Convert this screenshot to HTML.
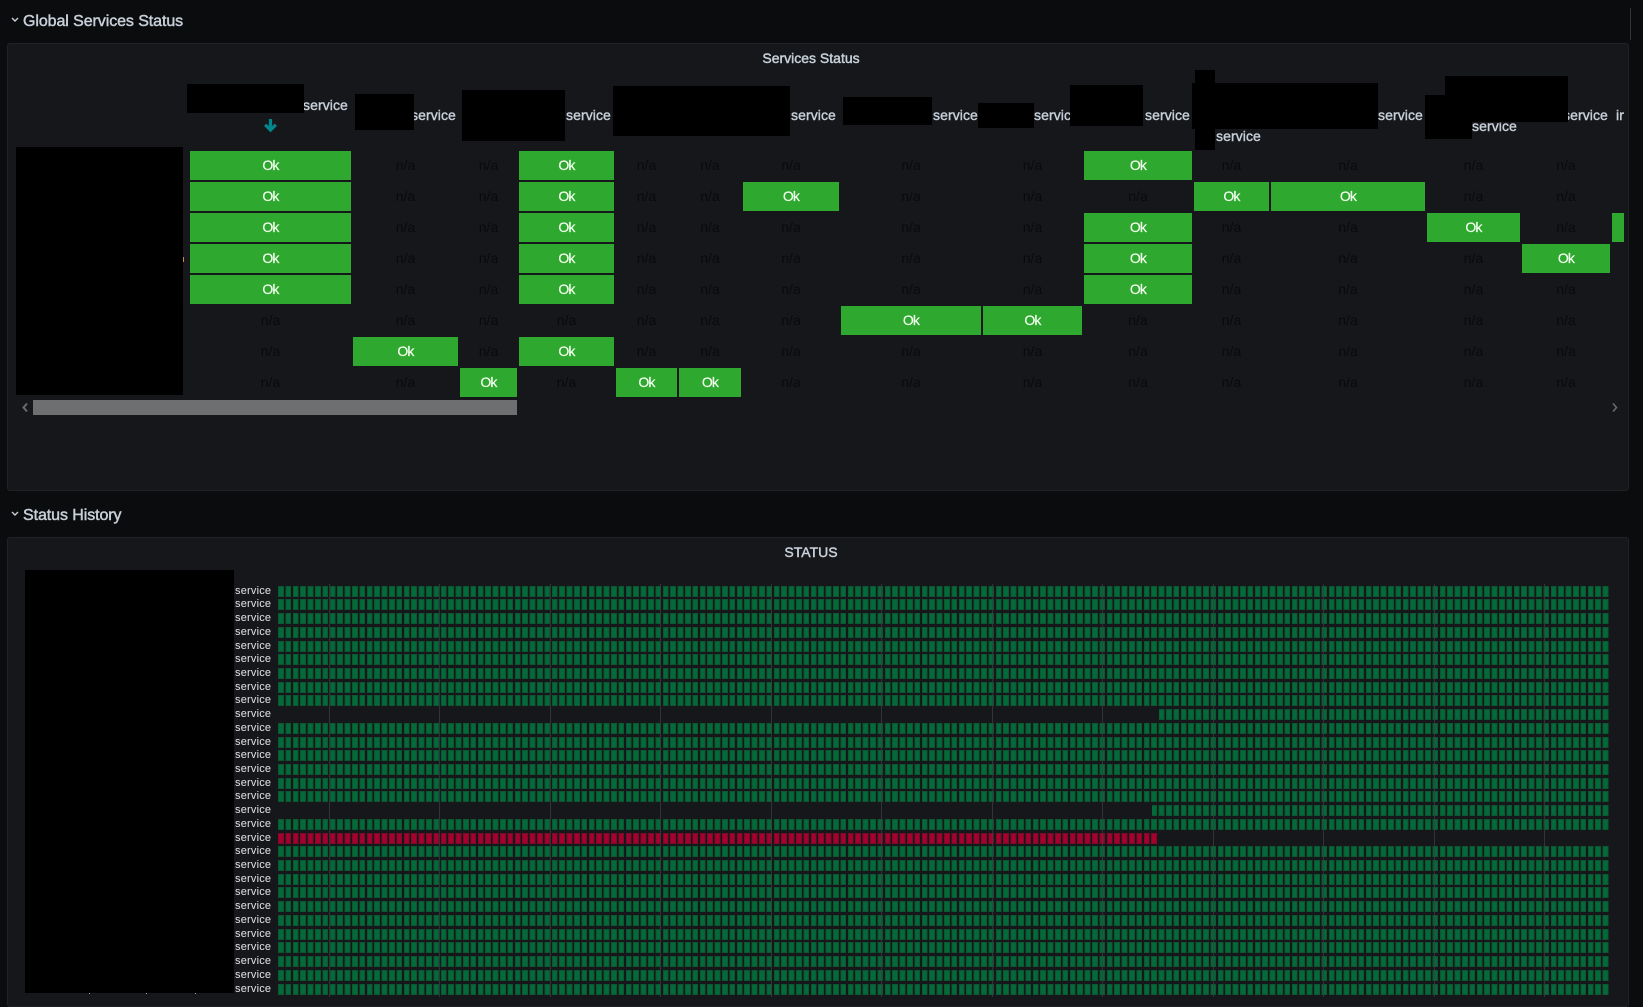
<!DOCTYPE html>
<html><head><meta charset="utf-8"><title>Status</title>
<style>
html,body{margin:0;padding:0;background:#0b0c0e;}
body{width:1643px;height:997px;position:relative;overflow:hidden;font-family:"Liberation Sans",sans-serif;}
.a{position:absolute;}
.panel{position:absolute;left:7px;width:1622px;background:#15171b;border:1px solid #202226;border-radius:3px;box-sizing:border-box;}
.sec{position:absolute;left:23px;font-size:16px;line-height:20px;color:#c7d0d9;letter-spacing:-.08px;-webkit-text-stroke:.45px #c7d0d9;white-space:nowrap;}
.ptitle{position:absolute;left:0;width:1606px;text-align:center;font-size:14px;line-height:18px;color:#c7d0d9;-webkit-text-stroke:.45px #c7d0d9;}
.h{position:absolute;font-size:14px;line-height:16px;color:#c7d0d9;letter-spacing:.08px;-webkit-text-stroke:.4px #c7d0d9;white-space:nowrap;}
.b{position:absolute;background:#000;}
.grid{position:absolute;left:190px;top:151px;display:grid;grid-template-columns:161px 105px 57px 95px 61px 62px 96px 140px 99px 108px 75px 154px 93px 88px 12px;grid-auto-rows:29px;column-gap:2px;row-gap:2px;}
.grid div{font-size:14px;line-height:29px;text-align:center;color:#090a0c;overflow:hidden;white-space:nowrap;}
.grid .o{background:#2fa82f;color:#f4fff0;letter-spacing:-.8px;-webkit-text-stroke:.2px #f4fff0;}
</style></head>
<body>

<div class="panel" style="top:43px;height:448px;"><div class="ptitle" style="top:5px;">Services Status</div></div>
<div class="panel" style="top:537px;height:470px;"><div class="ptitle" style="top:5px;">STATUS</div></div>

<svg class="a" style="left:0;top:0;" width="40" height="530"><path d="M12 18l3 3 3-3" fill="none" stroke="#c7d0d9" stroke-width="1.4"/><path d="M12 512l3 3 3-3" fill="none" stroke="#c7d0d9" stroke-width="1.4"/></svg>
<div class="sec" style="top:12px;">Global Services Status</div>
<div class="sec" style="top:506px;">Status History</div>

<div class="a" style="left:1630px;top:8px;width:1px;height:32px;background:#33363a;"></div>

<!-- table headers -->
<div class="h" style="left:303px;top:97px;">service</div>
<div class="h" style="left:411px;top:107px;">service</div>
<div class="h" style="left:566px;top:107px;">service</div>
<div class="h" style="left:791px;top:107px;">service</div>
<div class="h" style="left:933px;top:107px;">service</div>
<div class="h" style="left:1034px;top:107px;">service</div>
<div class="h" style="left:1145px;top:107px;">service</div>
<div class="h" style="left:1378px;top:107px;">service</div>
<div class="h" style="left:1216px;top:128px;">service</div>
<div class="h" style="left:1472px;top:118px;">service</div>
<div class="h" style="left:1563px;top:107px;">service</div>
<div class="h" style="left:1616px;top:107px;">ir</div>

<svg class="a" style="left:260px;top:115px;" width="22" height="20"><path d="M10.5 4v11M5.2 9.8l5.3 5.3 5.3-5.3" fill="none" stroke="#00878c" stroke-width="3.2"/></svg>

<div class="b" style="left:187px;top:84px;width:117px;height:29px;"></div>
<div class="b" style="left:355px;top:94px;width:59px;height:36px;"></div>
<div class="b" style="left:462px;top:90px;width:103px;height:51px;"></div>
<div class="b" style="left:613px;top:86px;width:177px;height:50px;"></div>
<div class="b" style="left:843px;top:97px;width:89px;height:28px;"></div>
<div class="b" style="left:978px;top:103px;width:56px;height:25px;"></div>
<div class="b" style="left:1070px;top:85px;width:73px;height:41px;"></div>
<div class="b" style="left:1192px;top:83px;width:186px;height:46px;"></div>
<div class="b" style="left:1195px;top:70px;width:20px;height:80px;"></div>
<div class="b" style="left:1425px;top:95px;width:47px;height:44px;"></div>
<div class="b" style="left:1445px;top:76px;width:123px;height:46px;"></div>
<div class="b" style="left:16px;top:147px;width:167px;height:248px;"></div>
<div class="a" style="left:183px;top:257px;width:1px;height:5px;background:#c98a4a;"></div>

<!-- table body -->
<div class="grid">
<div class="o">Ok</div><div>n/a</div><div>n/a</div><div class="o">Ok</div><div>n/a</div><div>n/a</div><div>n/a</div><div>n/a</div><div>n/a</div><div class="o">Ok</div><div>n/a</div><div>n/a</div><div>n/a</div><div>n/a</div><div></div>
<div class="o">Ok</div><div>n/a</div><div>n/a</div><div class="o">Ok</div><div>n/a</div><div>n/a</div><div class="o">Ok</div><div>n/a</div><div>n/a</div><div>n/a</div><div class="o">Ok</div><div class="o">Ok</div><div>n/a</div><div>n/a</div><div></div>
<div class="o">Ok</div><div>n/a</div><div>n/a</div><div class="o">Ok</div><div>n/a</div><div>n/a</div><div>n/a</div><div>n/a</div><div>n/a</div><div class="o">Ok</div><div>n/a</div><div>n/a</div><div class="o">Ok</div><div>n/a</div><div class="o"></div>
<div class="o">Ok</div><div>n/a</div><div>n/a</div><div class="o">Ok</div><div>n/a</div><div>n/a</div><div>n/a</div><div>n/a</div><div>n/a</div><div class="o">Ok</div><div>n/a</div><div>n/a</div><div>n/a</div><div class="o">Ok</div><div></div>
<div class="o">Ok</div><div>n/a</div><div>n/a</div><div class="o">Ok</div><div>n/a</div><div>n/a</div><div>n/a</div><div>n/a</div><div>n/a</div><div class="o">Ok</div><div>n/a</div><div>n/a</div><div>n/a</div><div>n/a</div><div></div>
<div>n/a</div><div>n/a</div><div>n/a</div><div>n/a</div><div>n/a</div><div>n/a</div><div>n/a</div><div class="o">Ok</div><div class="o">Ok</div><div>n/a</div><div>n/a</div><div>n/a</div><div>n/a</div><div>n/a</div><div></div>
<div>n/a</div><div class="o">Ok</div><div>n/a</div><div class="o">Ok</div><div>n/a</div><div>n/a</div><div>n/a</div><div>n/a</div><div>n/a</div><div>n/a</div><div>n/a</div><div>n/a</div><div>n/a</div><div>n/a</div><div></div>
<div>n/a</div><div>n/a</div><div class="o">Ok</div><div>n/a</div><div class="o">Ok</div><div class="o">Ok</div><div>n/a</div><div>n/a</div><div>n/a</div><div>n/a</div><div>n/a</div><div>n/a</div><div>n/a</div><div>n/a</div><div></div>
</div>

<!-- scrollbar -->
<div class="a" style="left:33px;top:400px;width:484px;height:15px;background:#6e6f71;"></div>
<svg class="a" style="left:20px;top:400px;" width="12" height="16"><path d="M7 3.5l-3.5 4 3.5 4" fill="none" stroke="#6a6a6a" stroke-width="2"/></svg>
<svg class="a" style="left:1608px;top:400px;" width="12" height="16"><path d="M5 3.5l3.5 4-3.5 4" fill="none" stroke="#6a6a6a" stroke-width="1.6"/></svg>

<!-- status history -->
<div class="b" style="left:25px;top:570px;width:209px;height:423px;"></div>
<div class="a" style="left:89px;top:993px;width:1px;height:1px;background:#9aa;"></div>
<div class="a" style="left:146px;top:993px;width:1px;height:1px;background:#9aa;"></div>
<div class="a" style="left:195px;top:993px;width:1px;height:1px;background:#9aa;"></div>

<svg class="a" style="left:0;top:0;" width="1643" height="997" font-family="Liberation Sans, sans-serif">
<defs>
<g id="c10">
<rect x="0.5" y="0.5" width="4.8" height="10"/><rect x="7.9" y="0.5" width="4.8" height="10"/><rect x="15.3" y="0.5" width="4.8" height="10"/><rect x="22.7" y="0.5" width="4.8" height="10"/><rect x="30.1" y="0.5" width="4.8" height="10"/><rect x="37.5" y="0.5" width="4.8" height="10"/><rect x="44.9" y="0.5" width="4.8" height="10"/><rect x="52.3" y="0.5" width="4.8" height="10"/><rect x="59.7" y="0.5" width="4.8" height="10"/><rect x="67.1" y="0.5" width="4.8" height="10"/>
</g>
<g id="row">
<use href="#c10" x="0"/><use href="#c10" x="74"/><use href="#c10" x="148"/><use href="#c10" x="222"/><use href="#c10" x="296"/><use href="#c10" x="370"/><use href="#c10" x="444"/><use href="#c10" x="518"/><use href="#c10" x="592"/><use href="#c10" x="666"/><use href="#c10" x="740"/><use href="#c10" x="814"/><use href="#c10" x="888"/><use href="#c10" x="962"/><use href="#c10" x="1036"/><use href="#c10" x="1110"/><use href="#c10" x="1184"/><use href="#c10" x="1258"/>
</g>
</defs>
<g fill="#036a39" stroke="#0d5632" stroke-width="1" shape-rendering="crispEdges">
<use href="#row" x="278" y="586"/><use href="#row" x="278" y="599"/><use href="#row" x="278" y="613"/><use href="#row" x="278" y="627"/><use href="#row" x="278" y="641"/><use href="#row" x="278" y="654"/><use href="#row" x="278" y="668"/><use href="#row" x="278" y="682"/><use href="#row" x="278" y="695"/><use href="#row" x="278" y="709"/><use href="#row" x="278" y="723"/><use href="#row" x="278" y="737"/><use href="#row" x="278" y="750"/><use href="#row" x="278" y="764"/><use href="#row" x="278" y="778"/><use href="#row" x="278" y="791"/><use href="#row" x="278" y="805"/><use href="#row" x="278" y="819"/><use href="#row" x="278" y="846"/><use href="#row" x="278" y="860"/><use href="#row" x="278" y="874"/><use href="#row" x="278" y="887"/><use href="#row" x="278" y="901"/><use href="#row" x="278" y="915"/><use href="#row" x="278" y="929"/><use href="#row" x="278" y="942"/><use href="#row" x="278" y="956"/><use href="#row" x="278" y="970"/><use href="#row" x="278" y="984"/>
</g>
<g fill="#a8002d" stroke="#7d0a2a" stroke-width="1" shape-rendering="crispEdges"><use href="#row" x="278" y="833"/></g>
<g fill="#15171b">
<rect x="277" y="708" width="882" height="13"/>
<rect x="277" y="804" width="875" height="13"/>
<rect x="1157" y="832" width="453" height="13"/>
</g>
<g stroke="#3b3d42" stroke-width="1" opacity=".75">
<path d="M329.5 584V997M439.5 584V997M550.5 584V997M660.5 584V997M771.5 584V997M881.5 584V997M992.5 584V997M1102.5 584V997M1213.5 584V997M1323.5 584V997M1434.5 584V997M1544.5 584V997"/>
</g>
<g font-size="11" fill="#e2e3e4" letter-spacing=".2">
<text x="235" y="594">service</text><text x="235" y="607">service</text><text x="235" y="621">service</text><text x="235" y="635">service</text><text x="235" y="649">service</text><text x="235" y="662">service</text><text x="235" y="676">service</text><text x="235" y="690">service</text><text x="235" y="703">service</text><text x="235" y="717">service</text><text x="235" y="731">service</text><text x="235" y="745">service</text><text x="235" y="758">service</text><text x="235" y="772">service</text><text x="235" y="786">service</text><text x="235" y="799">service</text><text x="235" y="813">service</text><text x="235" y="827">service</text><text x="235" y="841">service</text><text x="235" y="854">service</text><text x="235" y="868">service</text><text x="235" y="882">service</text><text x="235" y="895">service</text><text x="235" y="909">service</text><text x="235" y="923">service</text><text x="235" y="937">service</text><text x="235" y="950">service</text><text x="235" y="964">service</text><text x="235" y="978">service</text><text x="235" y="992">service</text>
</g>
</svg>
</body></html>
